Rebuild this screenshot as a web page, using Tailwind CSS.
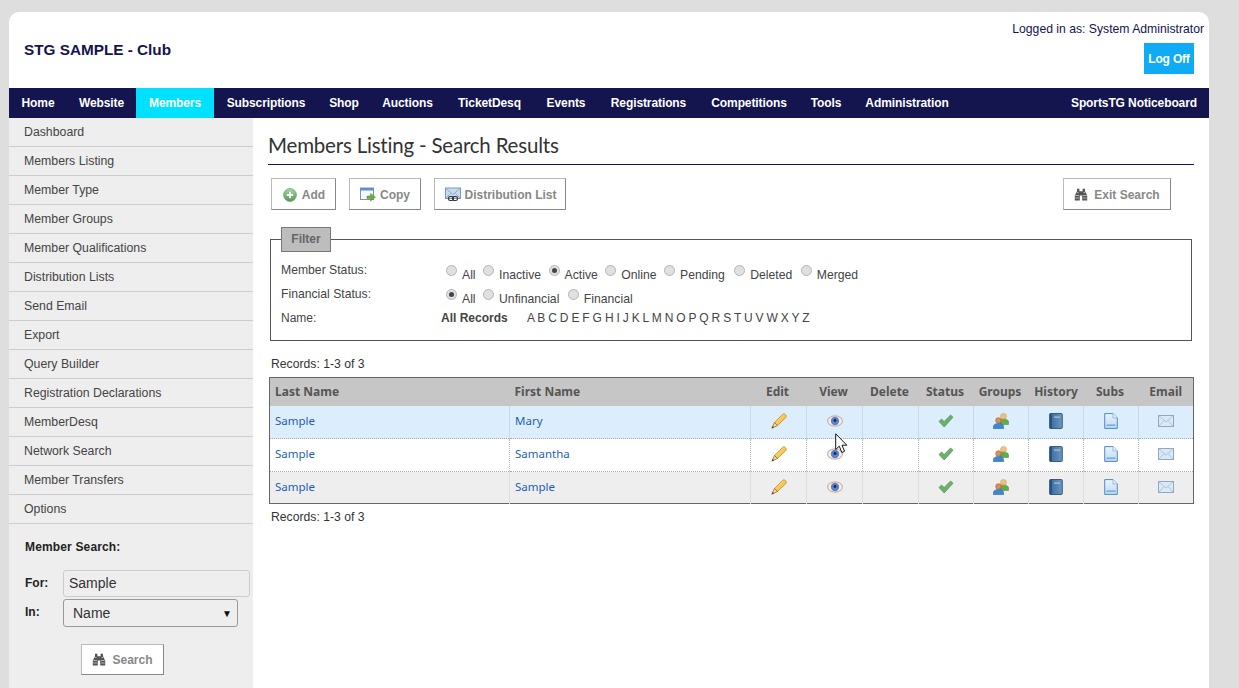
<!DOCTYPE html>
<html lang="en">
<head>
  <meta charset="UTF-8">
  <title>Members Listing - Search Results</title>
  <script src="https://cdn.jsdelivr.net/npm/@tailwindcss/browser@4"></script>
</head>
<body class="bg-[#dedede] font-['Liberation_Sans',sans-serif] text-[12px] text-[#333] h-[688px] overflow-hidden">

  <!-- Icon sprites -->
  <svg width="0" height="0" class="absolute">
    <defs>
      <linearGradient id="pen" x1="0" y1="0" x2="1" y2="1"><stop offset="0" stop-color="#ffe58a"/><stop offset="1" stop-color="#f0ae2c"/></linearGradient>
      <linearGradient id="bookg" x1="0" y1="0" x2="1" y2="0"><stop offset="0" stop-color="#3a6a9c"/><stop offset="1" stop-color="#6b98c2"/></linearGradient>
      <linearGradient id="docg" x1="0" y1="0" x2="0" y2="1"><stop offset="0" stop-color="#eaf4fe"/><stop offset="1" stop-color="#bcd9f5"/></linearGradient>
      <linearGradient id="addg" x1="0" y1="0" x2="0" y2="1"><stop offset="0" stop-color="#a8d9a0"/><stop offset="1" stop-color="#4f9a55"/></linearGradient>
    </defs>
    <symbol id="i-edit" viewBox="0 0 16 16">
      <path d="M3.500 9.500 11.500 1.500c1-1 2-.8 3 .2s1 2 .2 3L6.500 12.500Z" fill="url(#pen)" stroke="#c98a1c" stroke-width=".8"/>
      <path d="M3.500 9.500 .8 15.200 6.500 12.500Z" fill="#f3d9a8" stroke="#8a5a20" stroke-width=".7"/>
      <path d="M.8 15.200 3 14.200 1.800 13Z" fill="#3a2a18"/>
    </symbol>
    <symbol id="i-view" viewBox="0 0 16 12">
      <ellipse cx="8" cy="6" rx="8" ry="5.800" fill="#d4b096"/>
      <ellipse cx="8" cy="6" rx="6.800" ry="4.600" fill="#f2f2f6"/>
      <circle cx="8" cy="6" r="4.200" fill="#5b84c8"/>
      <circle cx="8" cy="5.500" r="1.400" fill="#14246a"/>
    </symbol>
    <symbol id="i-check" viewBox="0 0 16 14">
      <path d="M1 7.500 3.600 5l2.500 2.600L12.600 1 15 3.200 6.200 13Z" fill="#6cb36a" stroke="#4b8f52" stroke-width=".7"/>
    </symbol>
    <symbol id="i-groups" viewBox="0 0 16 16">
      <circle cx="10.500" cy="3.400" r="3" fill="#eec27e" stroke="#c79b52" stroke-width=".5"/>
      <path d="M7 11.500V8.400c0-1.400 1.300-2.200 3.500-2.200s5 .8 5 2.200v3.100Z" fill="#5cb04a" stroke="#3f8a36" stroke-width=".5"/>
      <circle cx="5.500" cy="7.500" r="2.800" fill="#d8905c" stroke="#8f4a2c" stroke-width=".5"/>
      <path d="M.4 15.800v-2.200c0-1.900 2-3.200 5.100-3.200s5.100 1.300 5.100 3.200v2.200Z" fill="#3f86d6" stroke="#2a5f9f" stroke-width=".5"/>
    </symbol>
    <symbol id="i-history" viewBox="0 0 14 16">
      <rect x=".7" y=".5" width="12.600" height="15" rx="1" fill="url(#bookg)" stroke="#2b5078" stroke-width=".9"/>
      <rect x=".7" y=".5" width="2.200" height="15" fill="#27507a"/>
      <rect x="5" y="3.500" width="6" height="1.200" fill="#a8c6e0"/>
    </symbol>
    <symbol id="i-subs" viewBox="0 0 14 16">
      <path d="M.7.600h8.300L13.300 5v10.400H.7Z" fill="url(#docg)" stroke="#4f8bc4" stroke-width="1"/>
      <path d="M9 .6V5h4.300" fill="#e4f0fb" stroke="#7aa9d6" stroke-width=".7"/>
      <rect x="2.500" y="11.500" width="9" height="1.300" fill="#6aa1d6"/>
    </symbol>
    <symbol id="i-email" viewBox="0 0 16 12">
      <rect x=".5" y=".5" width="15" height="11" fill="#dbe9f7" stroke="#8da9c6"/>
      <path d="M.8.800 8 7 15.200.8M.8 11.200 6 5.500M15.200 11.200 10 5.500" fill="none" stroke="#a9bfd6" stroke-width=".9"/>
    </symbol>
    <symbol id="i-add" viewBox="0 0 14 14">
      <circle cx="7" cy="7" r="6.400" fill="url(#addg)" stroke="#5f9a62" stroke-width=".7"/>
      <path d="M7 3.800v6.400M3.800 7h6.400" stroke="#fff" stroke-width="1.800"/>
    </symbol>
    <symbol id="i-copy" viewBox="0 0 16 15">
      <rect x=".5" y="1" width="13" height="11.500" fill="#f5f8fc" stroke="#7d93ad"/>
      <rect x=".5" y="1" width="13" height="2.500" fill="#5f8fd0"/>
      <path d="M7 9h3.500V6.500L15.500 10.200 10.500 14V11.500H7Z" fill="#6fae3c" stroke="#4d8a28" stroke-width=".5"/>
    </symbol>
    <symbol id="i-dist" viewBox="0 0 16 15">
      <rect x=".5" y="1" width="15" height="10.500" fill="#c8dbef" stroke="#7f97b3"/>
      <path d="M1 1.500 8 7.500 15 1.500M1 11 5.500 6.500M15 11 10.500 6.500" fill="none" stroke="#8aa5c2" stroke-width=".9"/>
      <rect x="3.500" y="9.500" width="5" height="4" rx="1.800" fill="none" stroke="#333" stroke-width="1.200"/>
      <rect x="7.500" y="9.500" width="5" height="4" rx="1.800" fill="none" stroke="#333" stroke-width="1.200"/>
    </symbol>
    <symbol id="i-find" viewBox="0 0 14 13">
      <path d="M3 .8h2.400v2.400h3.200V.8H11v2.400l2.200 4.300v5H8.200V7.500H5.800v5H.8v-5L3 3.200Z" fill="#555"/>
      <path d="M1.200 7.500h3.900M8.800 7.500h3.900M1.200 10h3.900M8.800 10h3.900M3 4.500h1.500M9.500 4.500H11" stroke="#ccc" stroke-width=".8"/>
    </symbol>
  </svg>

  <div class="mx-[9px] mt-[12px] w-[1200px] h-[676px] bg-white rounded-t-[10px] flex flex-col overflow-hidden">

    <!-- Header -->
    <header class="h-[76px] flex justify-between shrink-0">
      <div class="pl-[15px] pt-[29px] text-[15.300px] leading-[18px] font-bold text-[#14144f]">STG SAMPLE - Club</div>
      <div class="flex flex-col items-end pr-[5px] pt-[10px] text-[#14144f]">
        <div class="leading-[14px] text-[12.200px]">Logged in as: System Administrator</div>
        <a class="mt-[7px] mr-[10px] w-[50px] h-[31px] flex items-center justify-center bg-[#0fabf5] text-white font-bold tracking-[-0.2px]">Log Off</a>
      </div>
    </header>

    <!-- Nav -->
    <nav class="h-[30px] bg-[#14144f] flex justify-between text-white font-bold tracking-[-0.1px] shrink-0">
      <div class="flex h-full">
        <a class="w-[58px] flex items-center justify-center pb-[1px]">Home</a>
        <a class="w-[69px] flex items-center justify-center pb-[1px]">Website</a>
        <a class="w-[78px] flex items-center justify-center pb-[1px] bg-[#00e1ff]">Members</a>
        <a class="w-[104px] flex items-center justify-center pb-[1px]">Subscriptions</a>
        <a class="w-[52px] flex items-center justify-center pb-[1px]">Shop</a>
        <a class="w-[75px] flex items-center justify-center pb-[1px]">Auctions</a>
        <a class="w-[89px] flex items-center justify-center pb-[1px]">TicketDesq</a>
        <a class="w-[64px] flex items-center justify-center pb-[1px]">Events</a>
        <a class="w-[101px] flex items-center justify-center pb-[1px]">Registrations</a>
        <a class="w-[100px] flex items-center justify-center pb-[1px]">Competitions</a>
        <a class="w-[54px] flex items-center justify-center pb-[1px]">Tools</a>
        <a class="w-[108px] flex items-center justify-center pb-[1px]">Administration</a>
      </div>
      <a class="pr-[12px] flex items-center pb-[1px]">SportsTG Noticeboard</a>
    </nav>

    <div class="flex flex-1 min-h-0">
      <!-- Sidebar -->
      <aside class="w-[244px] bg-[#eeeeee] shrink-0">
        <ul class="text-[#444] text-[12.300px]">
          <li class="h-[29px] pl-[15px] pt-[7px] leading-[14px] border-b border-[#ccc]">Dashboard</li>
          <li class="h-[29px] pl-[15px] pt-[7px] leading-[14px] border-b border-[#ccc]">Members Listing</li>
          <li class="h-[29px] pl-[15px] pt-[7px] leading-[14px] border-b border-[#ccc]">Member Type</li>
          <li class="h-[29px] pl-[15px] pt-[7px] leading-[14px] border-b border-[#ccc]">Member Groups</li>
          <li class="h-[29px] pl-[15px] pt-[7px] leading-[14px] border-b border-[#ccc]">Member Qualifications</li>
          <li class="h-[29px] pl-[15px] pt-[7px] leading-[14px] border-b border-[#ccc]">Distribution Lists</li>
          <li class="h-[29px] pl-[15px] pt-[7px] leading-[14px] border-b border-[#ccc]">Send Email</li>
          <li class="h-[29px] pl-[15px] pt-[7px] leading-[14px] border-b border-[#ccc]">Export</li>
          <li class="h-[29px] pl-[15px] pt-[7px] leading-[14px] border-b border-[#ccc]">Query Builder</li>
          <li class="h-[29px] pl-[15px] pt-[7px] leading-[14px] border-b border-[#ccc]">Registration Declarations</li>
          <li class="h-[29px] pl-[15px] pt-[7px] leading-[14px] border-b border-[#ccc]">MemberDesq</li>
          <li class="h-[29px] pl-[15px] pt-[7px] leading-[14px] border-b border-[#ccc]">Network Search</li>
          <li class="h-[29px] pl-[15px] pt-[7px] leading-[14px] border-b border-[#ccc]">Member Transfers</li>
          <li class="h-[29px] pl-[15px] pt-[7px] leading-[14px] border-b border-[#ccc]">Options</li>
        </ul>
        <div class="pl-[16px] pt-[16px]">
          <div class="font-bold text-[#222] leading-[14px] tracking-[0.15px]">Member Search:</div>
          <div class="flex items-center mt-[16px]">
            <span class="w-[38px] font-bold text-[#222] pb-[2px]">For:</span>
            <div class="w-[187px] h-[27px] pl-[5px] flex items-center bg-[#eeeeee] border border-[#ccc] rounded-[3px] text-[14px] text-[#333]">Sample</div>
          </div>
          <div class="flex items-center mt-[2px]">
            <span class="w-[38px] font-bold text-[#222] pb-[3px]">In:</span>
            <div class="w-[175px] h-[28px] pl-[9px] pr-[5px] flex items-center justify-between bg-[#eeeeee] border border-[#999] rounded-[3px] text-[14px] text-[#333]">Name<span class="text-[10px] text-[#111]">▼</span></div>
          </div>
          <a class="ml-[56px] mt-[17px] w-[83px] h-[31px] flex items-center justify-center gap-[6px] bg-white border border-[#bbb] border-b-[#888] border-r-[#888] font-bold text-[#888]">
            <svg class="w-[14px] h-[13px]"><use href="#i-find"/></svg>Search
          </a>
        </div>
      </aside>

      <!-- Main content -->
      <main class="flex-1 pl-[15px] pr-[15px] min-w-0">
        <h1 class="mt-[14px] h-[33px] font-['Lato',sans-serif] text-[20.500px] tracking-[-0.2px] leading-[27px] text-[#333] border-b border-[#14144f]">Members Listing - Search Results</h1>

        <div class="flex mt-[13px] pl-[3px] pr-[23px] font-bold text-[#888]">
          <a class="w-[65px] h-[32px] pt-[1px] flex items-center justify-center gap-[5px] border border-[#bbb] border-b-[#888] border-r-[#888]"><svg class="w-[14px] h-[14px] ml-[1px]"><use href="#i-add"/></svg>Add</a>
          <a class="ml-[13px] w-[72px] h-[32px] pt-[1px] flex items-center justify-center gap-[4px] border border-[#bbb] border-b-[#888] border-r-[#888]"><svg class="w-[16px] h-[15px]"><use href="#i-copy"/></svg>Copy</a>
          <a class="ml-[13px] w-[132px] h-[32px] pt-[1px] pl-[1px] flex items-center justify-center gap-[4px] border border-[#bbb] border-b-[#888] border-r-[#888]"><svg class="w-[16px] h-[15px]"><use href="#i-dist"/></svg>Distribution List</a>
          <a class="ml-auto w-[108px] h-[32px] pt-[1px] flex items-center justify-center gap-[6px] border border-[#bbb] border-b-[#888] border-r-[#888]"><svg class="w-[14px] h-[13px]"><use href="#i-find"/></svg>Exit Search</a>
        </div>

        <!-- Filter -->
        <fieldset class="mt-[17px] ml-[2px] w-[922px] h-[114px] border border-[#555] pl-[10px] text-[#444]">
          <legend class="w-[50px] h-[25px] pb-[1px] flex items-center justify-center bg-[#bdbdbd] border border-[#777] font-bold text-[#666]">Filter</legend>
          <div class="flex h-[24px] mt-[11px] text-[12.200px]">
            <span class="w-[165px] leading-[14px]">Member Status:</span>
            <div class="flex gap-[7.500px] leading-[14px] pt-[5px]">
              <label class="flex gap-[5px]"><span class="w-[11px] h-[11px] mt-[-3px] rounded-full border border-[#b5b5b5] bg-[#e0e0e0]"></span>All</label>
              <label class="flex gap-[5px]"><span class="w-[11px] h-[11px] mt-[-3px] rounded-full border border-[#b5b5b5] bg-[#e0e0e0]"></span>Inactive</label>
              <label class="flex gap-[5px]"><span class="w-[11px] h-[11px] mt-[-3px] rounded-full border border-[#b5b5b5] bg-[#e0e0e0] flex items-center justify-center"><span class="w-[5px] h-[5px] rounded-full bg-[#444]"></span></span>Active</label>
              <label class="flex gap-[5px]"><span class="w-[11px] h-[11px] mt-[-3px] rounded-full border border-[#b5b5b5] bg-[#e0e0e0]"></span>Online</label>
              <label class="flex gap-[5px]"><span class="w-[11px] h-[11px] mt-[-3px] rounded-full border border-[#b5b5b5] bg-[#e0e0e0]"></span>Pending</label>
              <label class="flex gap-[5px] ml-[2px]"><span class="w-[11px] h-[11px] mt-[-3px] rounded-full border border-[#b5b5b5] bg-[#e0e0e0]"></span>Deleted</label>
              <label class="flex gap-[5px] ml-[1px]"><span class="w-[11px] h-[11px] mt-[-3px] rounded-full border border-[#b5b5b5] bg-[#e0e0e0]"></span>Merged</label>
            </div>
          </div>
          <div class="flex h-[24px] text-[12.200px]">
            <span class="w-[165px] leading-[14px]">Financial Status:</span>
            <div class="flex gap-[7.500px] leading-[14px] pt-[5px]">
              <label class="flex gap-[5px]"><span class="w-[11px] h-[11px] mt-[-3px] rounded-full border border-[#b5b5b5] bg-[#e0e0e0] flex items-center justify-center"><span class="w-[5px] h-[5px] rounded-full bg-[#444]"></span></span>All</label>
              <label class="flex gap-[5px]"><span class="w-[11px] h-[11px] mt-[-3px] rounded-full border border-[#b5b5b5] bg-[#e0e0e0]"></span>Unfinancial</label>
              <label class="flex gap-[5px] ml-[1px]"><span class="w-[11px] h-[11px] mt-[-3px] rounded-full border border-[#b5b5b5] bg-[#e0e0e0]"></span>Financial</label>
            </div>
          </div>
          <div class="flex h-[24px]">
            <span class="w-[160px] leading-[14px]">Name:</span>
            <span class="w-[86px] leading-[14px] font-bold">All Records</span>
            <span class="leading-[14px] tracking-[-0.2px]">A B C D E F G H I J K L M N O P Q R S T U V W X Y Z</span>
          </div>
        </fieldset>

        <div class="mt-[16px] pl-[3px] leading-[14px] text-[12.200px]">Records: 1-3 of 3</div>

        <!-- Results -->
        <table class="mt-[6px] ml-[1px] w-[925px] table-fixed border-collapse border border-[#666] font-['Noto_Sans',sans-serif] text-[11.500px]">
          <colgroup>
            <col class="w-[240px]"><col class="w-[241px]"><col class="w-[56px]"><col class="w-[56px]"><col class="w-[56px]"><col class="w-[55px]"><col class="w-[55px]"><col class="w-[55px]"><col class="w-[55px]"><col>
          </colgroup>
          <thead>
            <tr class="h-[28px] bg-[#c6c6c6] text-[#555] font-bold text-[12px]">
              <th class="text-left pl-[5px]">Last Name</th>
              <th class="text-left pl-[5px]">First Name</th>
              <th class="pr-[2px]">Edit</th><th class="pr-[2px]">View</th><th class="pr-[2px]">Delete</th><th class="pr-[2px]">Status</th><th class="pr-[2px]">Groups</th><th>History</th><th class="pr-[2px]">Subs</th><th>Email</th>
            </tr>
          </thead>
          <tbody class="text-[#1f5fb0]">
            <tr class="h-[33px] bg-[#dcedfd] border-b border-dotted border-[#aaa]">
              <td class="pl-[5px] pb-[2px] border-r border-[#ccd9e6]">Sample</td>
              <td class="pl-[5px] pb-[2px] border-r border-[#ccd9e6]">Mary</td>
              <td class="border-r border-[#ccd9e6]"><svg class="w-[16px] h-[16px] mx-auto -translate-y-px"><use href="#i-edit"/></svg></td>
              <td class="border-r border-[#ccd9e6]"><svg class="w-[16px] h-[12px] mx-auto -translate-y-px"><use href="#i-view"/></svg></td>
              <td class="border-r border-[#ccd9e6]"></td>
              <td class="border-r border-[#ccd9e6]"><svg class="w-[16px] h-[14px] mx-auto -translate-y-px"><use href="#i-check"/></svg></td>
              <td class="border-r border-[#ccd9e6]"><svg class="w-[16px] h-[16px] mx-auto -translate-y-px"><use href="#i-groups"/></svg></td>
              <td class="border-r border-[#ccd9e6]"><svg class="w-[14px] h-[16px] mx-auto -translate-y-px"><use href="#i-history"/></svg></td>
              <td class="border-r border-[#ccd9e6]"><svg class="w-[14px] h-[16px] mx-auto -translate-y-px"><use href="#i-subs"/></svg></td>
              <td><svg class="w-[16px] h-[12px] mx-auto -translate-y-px"><use href="#i-email"/></svg></td>
            </tr>
            <tr class="h-[33px] bg-white border-b border-dotted border-[#aaa]">
              <td class="pl-[5px] pb-[2px] border-r border-dotted border-[#bbb]">Sample</td>
              <td class="pl-[5px] pb-[2px] border-r border-dotted border-[#bbb]">Samantha</td>
              <td class="border-r border-dotted border-[#bbb]"><svg class="w-[16px] h-[16px] mx-auto -translate-y-px"><use href="#i-edit"/></svg></td>
              <td class="border-r border-dotted border-[#bbb]"><svg class="w-[16px] h-[12px] mx-auto -translate-y-px"><use href="#i-view"/></svg></td>
              <td class="border-r border-dotted border-[#bbb]"></td>
              <td class="border-r border-dotted border-[#bbb]"><svg class="w-[16px] h-[14px] mx-auto -translate-y-px"><use href="#i-check"/></svg></td>
              <td class="border-r border-dotted border-[#bbb]"><svg class="w-[16px] h-[16px] mx-auto -translate-y-px"><use href="#i-groups"/></svg></td>
              <td class="border-r border-dotted border-[#bbb]"><svg class="w-[14px] h-[16px] mx-auto -translate-y-px"><use href="#i-history"/></svg></td>
              <td class="border-r border-dotted border-[#bbb]"><svg class="w-[14px] h-[16px] mx-auto -translate-y-px"><use href="#i-subs"/></svg></td>
              <td><svg class="w-[16px] h-[12px] mx-auto -translate-y-px"><use href="#i-email"/></svg></td>
            </tr>
            <tr class="h-[32px] bg-[#eeeeee]">
              <td class="pl-[5px] pb-[2px] border-r border-[#ddd]">Sample</td>
              <td class="pl-[5px] pb-[2px] border-r border-[#ddd]">Sample</td>
              <td class="border-r border-[#ddd]"><svg class="w-[16px] h-[16px] mx-auto -translate-y-px"><use href="#i-edit"/></svg></td>
              <td class="border-r border-[#ddd]"><svg class="w-[16px] h-[12px] mx-auto -translate-y-px"><use href="#i-view"/></svg></td>
              <td class="border-r border-[#ddd]"></td>
              <td class="border-r border-[#ddd]"><svg class="w-[16px] h-[14px] mx-auto -translate-y-px"><use href="#i-check"/></svg></td>
              <td class="border-r border-[#ddd]"><svg class="w-[16px] h-[16px] mx-auto -translate-y-px"><use href="#i-groups"/></svg></td>
              <td class="border-r border-[#ddd]"><svg class="w-[14px] h-[16px] mx-auto -translate-y-px"><use href="#i-history"/></svg></td>
              <td class="border-r border-[#ddd]"><svg class="w-[14px] h-[16px] mx-auto -translate-y-px"><use href="#i-subs"/></svg></td>
              <td><svg class="w-[16px] h-[12px] mx-auto -translate-y-px"><use href="#i-email"/></svg></td>
            </tr>
          </tbody>
        </table>

        <div class="mt-[6px] pl-[3px] leading-[14px] text-[12.200px]">Records: 1-3 of 3</div>
      </main>
    </div>
  </div>

  <!-- Mouse pointer in the screenshot -->
  <svg class="absolute left-[835px] top-[433px] w-[13px] h-[21px]" viewBox="0 0 13 21">
    <path d="M.7.8V16.500L4.300 13.200 6.800 19.500 9.600 18.300 7 12.200H11.800Z" fill="#fff" stroke="#111" stroke-width="1"/>
  </svg>
</body>
</html>
